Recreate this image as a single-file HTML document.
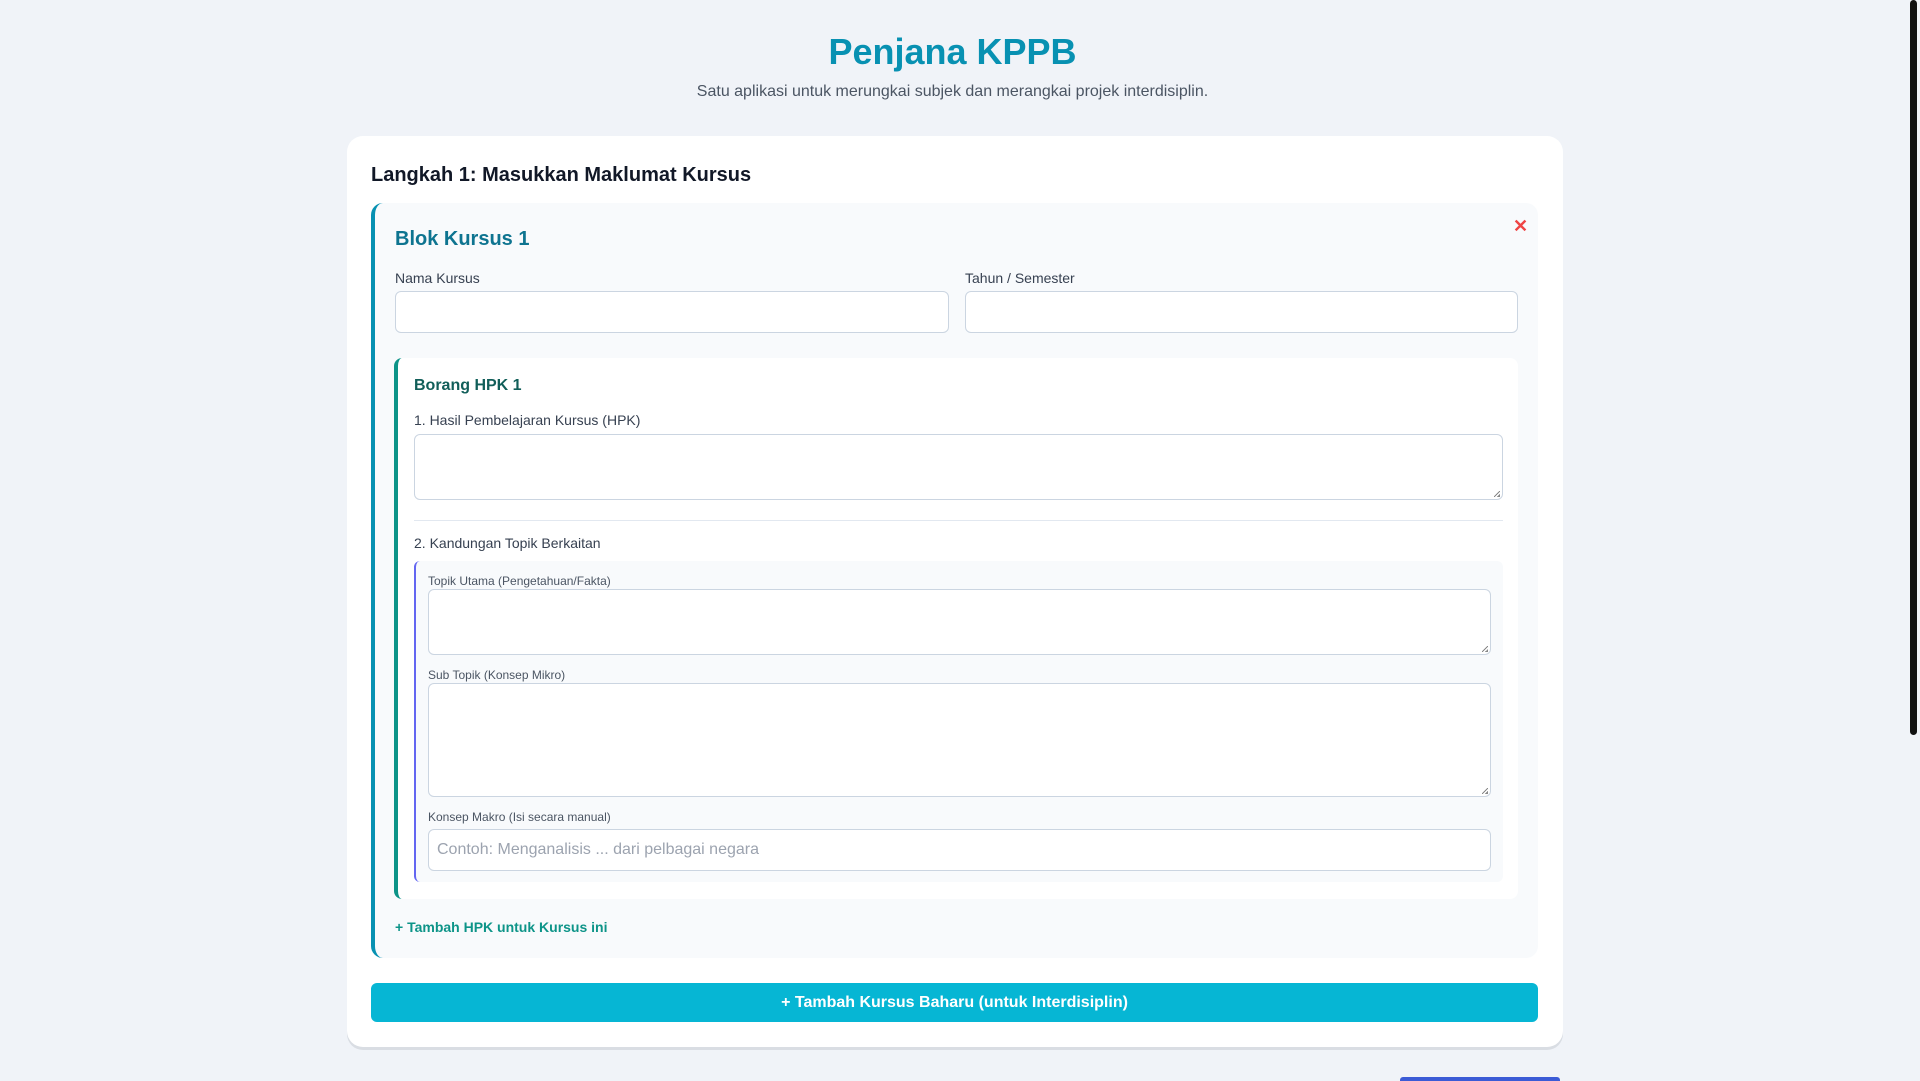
<!DOCTYPE html>
<html><head><meta charset="utf-8"><style>
*{box-sizing:border-box;margin:0;padding:0}
body{width:1920px;height:1080px;overflow:hidden;background:#f0f3f8;font-family:"Liberation Sans",sans-serif;position:relative;color:#374151}
.abs{position:absolute}
h1{position:absolute;left:0;width:1905px;top:31px;text-align:center;font-size:36px;font-weight:bold;color:#0891b2}
.sub{position:absolute;left:0;width:1905px;top:83px;text-align:center;font-size:16px;color:#4b5563}
.card{left:347px;top:136px;width:1216px;height:911px;background:#fff;border-radius:16px;box-shadow:0 3px 0 #d9dde3}
.inp{position:absolute;background:#fff;border:1px solid #cbd5e1;border-radius:6px}
.ta::after{content:"";position:absolute;right:2px;bottom:2px;width:6px;height:6px;background:linear-gradient(135deg,transparent 45%,#888 45%,#888 55%,transparent 55%,transparent 75%,#888 75%)}
.lbl{position:absolute;font-size:14px;color:#374151}
.sl{position:absolute;font-size:12px;color:#4b5563}
</style></head><body>
<h1>Penjana KPPB</h1>
<div class="sub">Satu aplikasi untuk merungkai subjek dan merangkai projek interdisiplin.</div>
<div class="abs card"></div>
<div class="abs" style="left:371px;top:164px;font-size:20px;font-weight:bold;color:#111827">Langkah 1: Masukkan Maklumat Kursus</div>
<div class="abs" style="left:371px;top:203px;width:1167px;height:755px;background:#f8fafc;border-left:4px solid #0891b2;border-radius:12px"></div>
<div class="abs" style="left:395px;top:228px;font-size:20px;font-weight:bold;color:#0e7490">Blok Kursus 1</div>
<div class="abs" style="left:1513px;top:216px;font-size:18px;font-weight:bold;color:#ef4444">✕</div>
<div class="lbl" style="left:395px;top:270px">Nama Kursus</div>
<div class="lbl" style="left:965px;top:270px">Tahun / Semester</div>
<div class="inp" style="left:395px;top:291px;width:554px;height:42px"></div>
<div class="inp" style="left:965px;top:291px;width:553px;height:42px"></div>
<div class="abs" style="left:394px;top:358px;width:1124px;height:541px;background:#fff;border-left:4px solid #0d9488;border-radius:8px"></div>
<div class="abs" style="left:414px;top:377px;font-size:16px;font-weight:bold;color:#115e59">Borang HPK 1</div>
<div class="lbl" style="left:414px;top:412px">1. Hasil Pembelajaran Kursus (HPK)</div>
<div class="inp ta" style="left:414px;top:434px;width:1089px;height:66px"></div>
<div class="abs" style="left:414px;top:520px;width:1089px;height:1px;background:#e2e8f0"></div>
<div class="lbl" style="left:414px;top:535px">2. Kandungan Topik Berkaitan</div>
<div class="abs" style="left:414px;top:561px;width:1089px;height:321px;background:#f8fafc;border-left:2px solid #6366f1;border-radius:6px"></div>
<div class="sl" style="left:428px;top:574px">Topik Utama (Pengetahuan/Fakta)</div>
<div class="inp ta" style="left:428px;top:589px;width:1063px;height:66px"></div>
<div class="sl" style="left:428px;top:668px">Sub Topik (Konsep Mikro)</div>
<div class="inp ta" style="left:428px;top:683px;width:1063px;height:114px"></div>
<div class="sl" style="left:428px;top:810px">Konsep Makro (Isi secara manual)</div>
<div class="inp" style="left:428px;top:829px;width:1063px;height:42px;padding:11px 8px;font-size:16px;color:#9ca3af">Contoh: Menganalisis ... dari pelbagai negara</div>
<div class="abs" style="left:395px;top:919px;font-size:14px;font-weight:bold;color:#0d9488">+ Tambah HPK untuk Kursus ini</div>
<div class="abs" style="left:371px;top:983px;width:1167px;height:39px;background:#06b6d4;border-radius:6px;color:#fff;font-size:16px;font-weight:bold;text-align:center;line-height:39px">+ Tambah Kursus Baharu (untuk Interdisiplin)</div>
<div class="abs" style="left:1400px;top:1077px;width:160px;height:4px;background:#3b5bd6;border-radius:3px 3px 0 0"></div>
<div class="abs" style="left:1910px;top:0;width:7px;height:735px;background:#111;border-radius:4px"></div>
</body></html>
